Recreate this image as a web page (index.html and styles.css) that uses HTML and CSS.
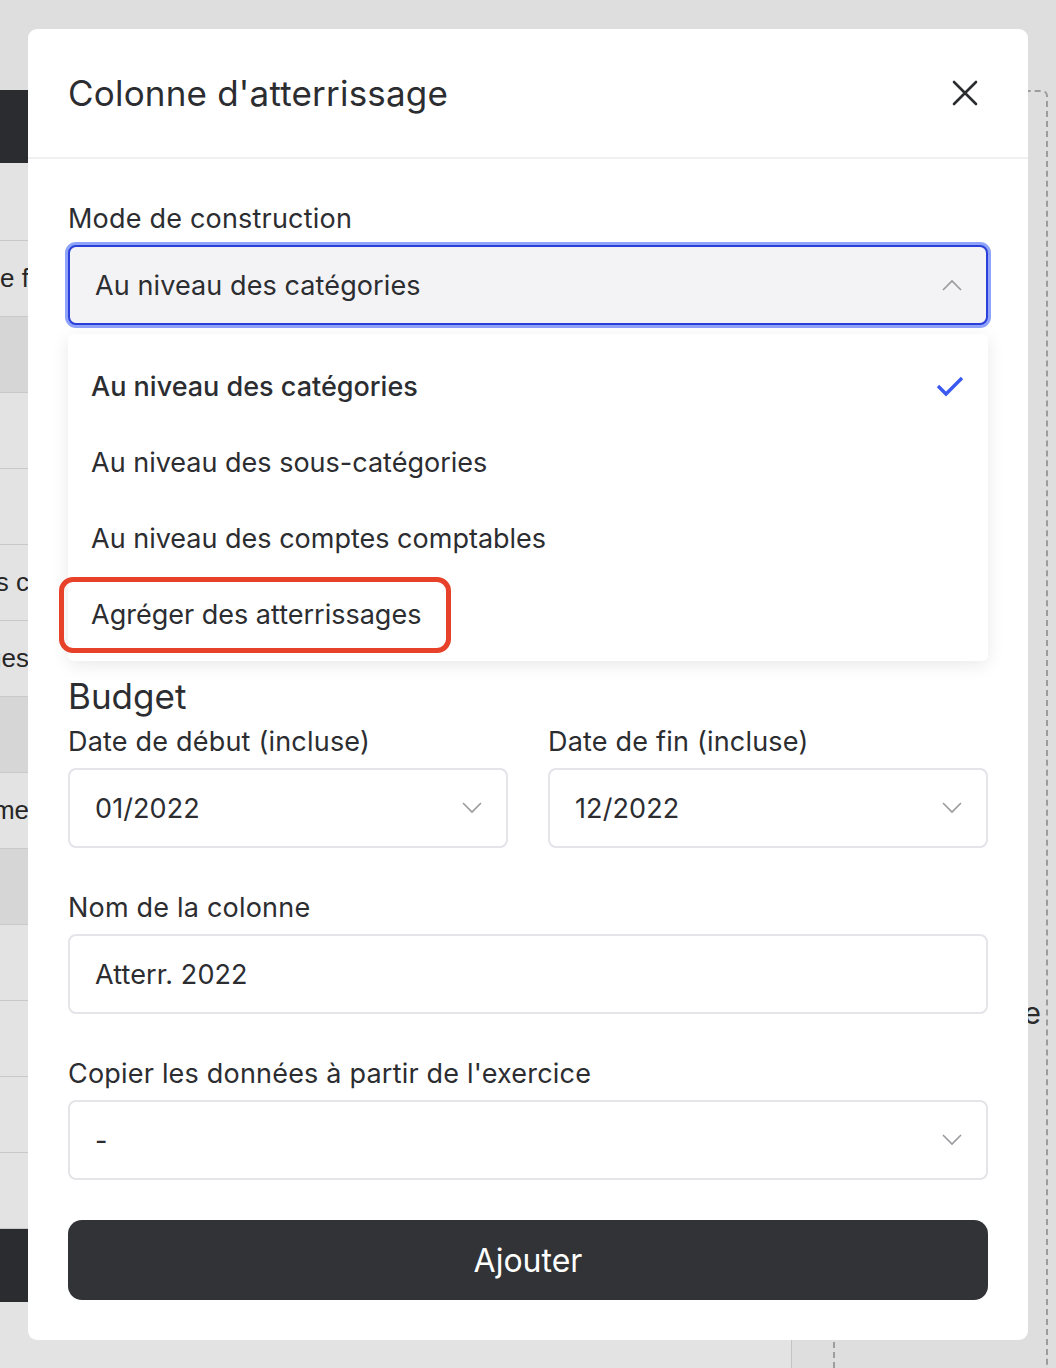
FILE: index.html
```html
<!DOCTYPE html>
<html lang="fr">
<head>
    <meta charset="UTF-8">
    <meta name="viewport" content="width=device-width, initial-scale=1.0">
    <title>Colonne d'atterrissage</title>
    <link rel="stylesheet" href="styles.css">
</head>
<body>

    <div class="page">
        <div class="table">
            <div class="row dark"></div>
            <div class="row first"></div>
            <div class="row"><span>Charge f</span></div>
            <div class="row shade"></div>
            <div class="row"></div>
            <div class="row"></div>
            <div class="row"><span>Charges c</span></div>
            <div class="row"><span>Charges</span></div>
            <div class="row shade"></div>
            <div class="row"><span>Somme</span></div>
            <div class="row shade"></div>
            <div class="row"></div>
            <div class="row"></div>
            <div class="row"></div>
            <div class="row"></div>
            <div class="row dark"></div>
        </div>
        <div class="side">
            <div class="col-line"></div>
            <div class="dashed-card"><span>Ajoute</span></div>
        </div>
    </div>

    <div class="modal">
        <div class="modal-header">
            <h2>Colonne d'atterrissage</h2>
            <button class="close">
                <svg width="26" height="26" viewBox="0 0 26 26"><path d="M2 2L24 24M24 2L2 24" stroke="#2b2c30" stroke-width="2.6" stroke-linecap="round"/></svg>
            </button>
        </div>

        <div class="modal-body">
            <div class="field mode">
                <label>Mode de construction</label>
                <div class="select open">
                    <span>Au niveau des catégories</span>
                    <svg class="chev" width="20" height="12" viewBox="0 0 20 12"><path d="M1 11L10 2L19 11" fill="none" stroke="#9a9a9e" stroke-width="1.6"/></svg>
                </div>

                <div class="dropdown-menu">
                    <div class="option selected">
                        Au niveau des catégories
                        <svg width="28" height="22" viewBox="0 0 28 22"><path d="M2 11L10 19L26 3" fill="none" stroke="#3b59f0" stroke-width="3.4"/></svg>
                    </div>
                    <div class="option">Au niveau des sous-catégories</div>
                    <div class="option">Au niveau des comptes comptables</div>
                    <div class="option">Agréger des atterrissages<div class="highlight"></div></div>
                </div>
            </div>

            <h3>Budget</h3>
            <div class="dates">
                <div class="field">
                    <label>Date de début (incluse)</label>
                    <div class="select">
                        <span>01/2022</span>
                        <svg class="chev" width="20" height="12" viewBox="0 0 20 12"><path d="M1 1L10 10L19 1" fill="none" stroke="#9a9a9e" stroke-width="1.6"/></svg>
                    </div>
                </div>
                <div class="field">
                    <label>Date de fin (incluse)</label>
                    <div class="select">
                        <span>12/2022</span>
                        <svg class="chev" width="20" height="12" viewBox="0 0 20 12"><path d="M1 1L10 10L19 1" fill="none" stroke="#9a9a9e" stroke-width="1.6"/></svg>
                    </div>
                </div>
            </div>

            <div class="field">
                <label>Nom de la colonne</label>
                <div class="select text-input"><span>Atterr. 2022</span></div>
            </div>

            <div class="field">
                <label>Copier les données à partir de l'exercice</label>
                <div class="select">
                    <span>-</span>
                    <svg class="chev" width="20" height="12" viewBox="0 0 20 12"><path d="M1 1L10 10L19 1" fill="none" stroke="#9a9a9e" stroke-width="1.6"/></svg>
                </div>
            </div>

            <button class="submit">Ajouter</button>
        </div>
    </div>

</body>
</html>
```

FILE: styles.css
```css
body {
    font-family: Inter, "Liberation Sans", sans-serif;
    margin: 0;
    padding: 0;
    background: #dedede;
    color: #2c2d31;
    height: 1368px;
    overflow: hidden;
}

.page {
    display: flex;
    height: 1368px;
    padding-top: 90px;
    box-sizing: border-box;
}

.table {
    width: 791px;
    border-right: 1px solid #c4c4c4;
    background: #e3e3e3;
}

.row {
    height: 76px;
    border-bottom: 1px solid #c9c9c9;
    box-sizing: border-box;
    font-family: "Liberation Sans", sans-serif;
    font-size: 26px;
    color: #262626;
    display: flex;
    align-items: center;
    justify-content: flex-end;
    padding-right: 762px;
    white-space: nowrap;
}

.row.first {
    height: 78px;
}

.row.shade {
    background: #d6d6d6;
}

.row.dark {
    height: 73px;
    background: #2b2c2f;
    border: none;
}

.side {
    display: flex;
    flex: 1;
}

.col-line {
    width: 41px;
    border-right: 2px dashed #9c9c9c;
}

.dashed-card {
    width: 213px;
    border-right: 2px dashed #9c9c9c;
    border-top: 2px dashed #9c9c9c;
    border-top-right-radius: 6px;
    display: flex;
    align-items: flex-start;
    justify-content: flex-end;
    padding-top: 903px;
    padding-right: 5px;
    box-sizing: border-box;
    font-size: 30px;
    line-height: 36px;
    color: #2b2b2b;
}

.modal {
    position: absolute;
    left: 28px;
    top: 29px;
    width: 1000px;
    height: 1311px;
    background: #fff;
    border-radius: 9px;
    box-sizing: border-box;
}

.modal-header {
    height: 128px;
    border-bottom: 2px solid #f0f0f2;
    display: flex;
    align-items: center;
    justify-content: space-between;
    padding: 0 50px 0 40px;
}

.modal-header h2 {
    margin: 0;
    font-size: 35px;
    font-weight: 400;
    letter-spacing: 0.2px;
}

.close {
    border: none;
    background: none;
    padding: 0;
    display: flex;
}

.modal-body {
    padding: 44px 40px 40px;
}

.field {
    display: flex;
    flex-direction: column;
    gap: 10px;
    margin-bottom: 44px;
}

.field label {
    font-size: 27px;
    line-height: 32px;
    font-weight: 400;
    letter-spacing: 0.2px;
}

.select {
    height: 80px;
    box-sizing: border-box;
    border: 2px solid #e4e4e9;
    border-radius: 8px;
    display: flex;
    align-items: center;
    justify-content: space-between;
    padding: 0 24px 0 25px;
    font-size: 27px;
    letter-spacing: 0.1px;
}

.select.open {
    background: #f3f3f5;
    border-color: #2b40d8;
    box-shadow: 0 0 0 3px #8ea3f9;
}

.mode {
    position: relative;
    margin-bottom: 351px;
}

.dropdown-menu {
    position: absolute;
    left: 0;
    right: 0;
    top: 131px;
    background: #fff;
    border-radius: 6px;
    box-shadow: 0 4px 18px rgba(0, 0, 0, 0.09);
    padding: 14px 0 9px;
    z-index: 1;
}

.option {
    position: relative;
    height: 76px;
    display: flex;
    align-items: center;
    justify-content: space-between;
    padding: 0 24px 0 23px;
    font-size: 27px;
}

.option.selected {
    font-weight: 500;
}

.highlight {
    position: absolute;
    left: -9px;
    top: 1px;
    width: 392px;
    height: 76px;
    border: 5px solid #e8412a;
    border-radius: 14px;
    box-sizing: border-box;
}

h3 {
    margin: 0 0 10px;
    font-size: 35px;
    line-height: 40px;
    font-weight: 400;
}

.dates {
    display: grid;
    grid-template-columns: 1fr 1fr;
    gap: 40px;
}

.submit {
    width: 100%;
    height: 80px;
    margin-top: -4px;
    border: none;
    border-radius: 14px;
    background: #323337;
    color: #fff;
    font-family: Inter, "Liberation Sans", sans-serif;
    font-size: 32px;
}
```
